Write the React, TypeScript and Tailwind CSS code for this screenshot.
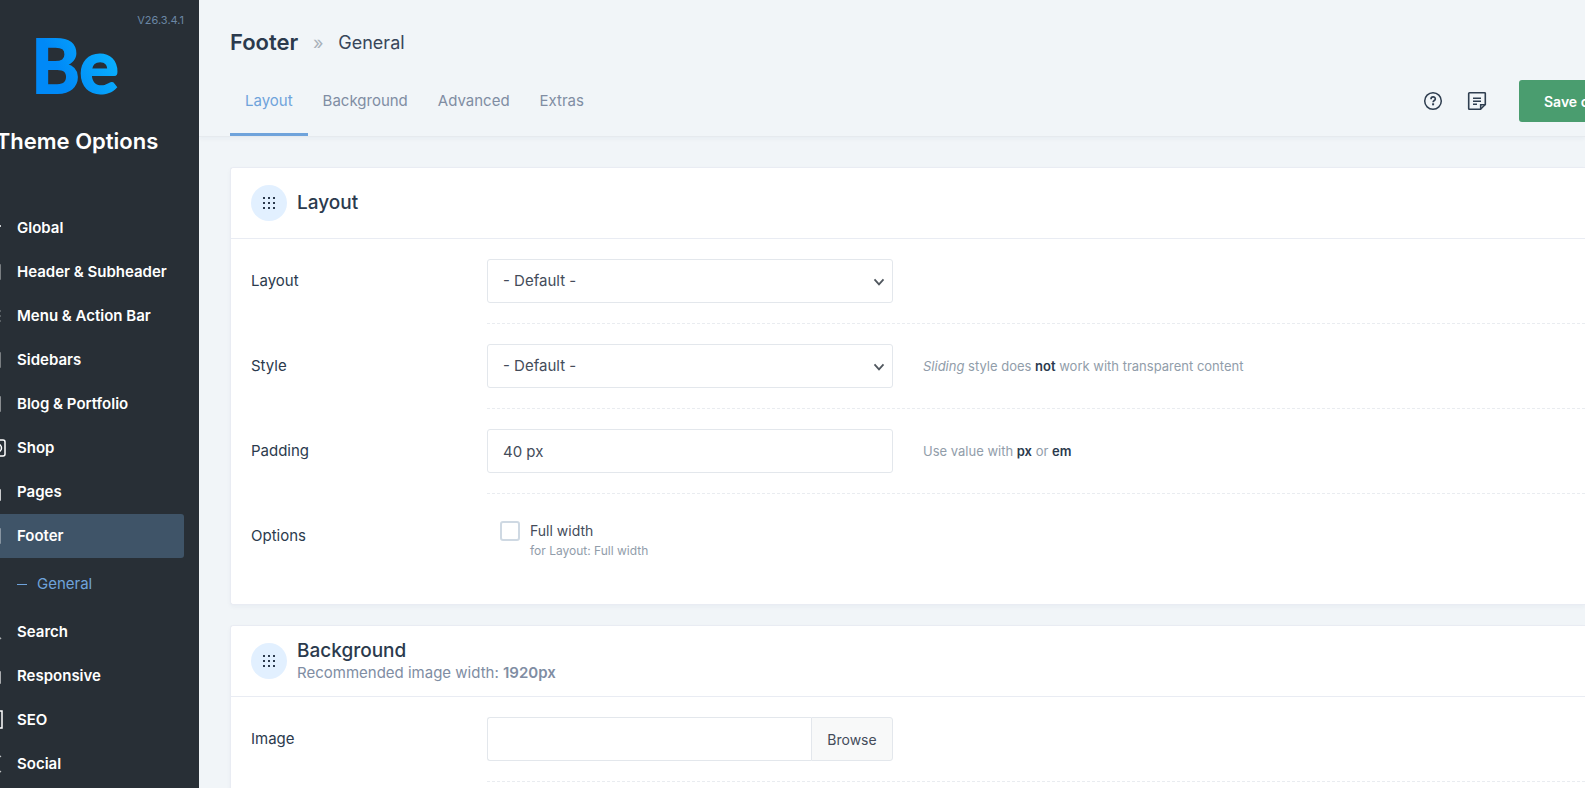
import { useState, type ReactNode } from "react";

const menu: { name: string; icon: ReactNode }[] = [
  { name: "Global", icon: <path d="M2 10h16M10 4v14" /> },
  { name: "Header & Subheader", icon: <path d="M3 5h14v14H3zM3 9h14" opacity=".5" /> },
  { name: "Menu & Action Bar", icon: <path d="M3 7h15M3 12h15M3 17h15" opacity=".3" /> },
  { name: "Sidebars", icon: <path d="M3 5h14v14H3zM9 5v14" opacity=".5" /> },
  { name: "Blog & Portfolio", icon: <path d="M3 5h14v14H3zM3 12h14M10 5v14" opacity=".6" /> },
  {
    name: "Shop",
    icon: (
      <>
        <rect x="6" y="4" width="16" height="16" rx="2" />
        <circle cx="14.500" cy="12" r="4" />
      </>
    ),
  },
  { name: "Pages", icon: <path d="M3 3h9l5 7v10H3z" /> },
  { name: "Footer", icon: <path d="M3 5h14v14H3zM3 15h14" opacity=".5" /> },
  { name: "Search", icon: <path d="M13 14l5 5M14 9a5 5 0 1 1-10 0 5 5 0 0 1 10 0" opacity=".6" /> },
  { name: "Responsive", icon: <path d="M3 5h10v14H3zM13 8h4v11h-4" opacity=".8" /> },
  { name: "SEO", icon: <path d="M3 3h16v17H3z" /> },
  { name: "Social", icon: <path d="M6 12l12-8M6 12l12 8" opacity=".7" /> },
];

const tabs = ["Layout", "Background", "Advanced", "Extras"];

const fieldClass =
  "h-11 w-full rounded-[3px] border border-[#e3e7ec] bg-white px-[15px] text-[15px] text-[#444c5a] outline-none";

function Sidebar() {
  return (
    <aside className="flex w-[199px] shrink-0 justify-end overflow-hidden bg-[#282f36]">
      <div className="w-[244px] shrink-0">
        <p className="h-9 pt-3 pr-[15px] text-right text-[11px] leading-4 text-[#6b87a5]">V26.3.4.1</p>
        <svg viewBox="0 0 92 62" className="mx-auto h-[62px] w-[92px] overflow-visible" role="img" aria-label="Be">
          <defs>
            <linearGradient id="be" x1="0" y1="0.7" x2="1" y2="0.2">
              <stop offset="0.3" stopColor="#0089f7" />
              <stop offset="1" stopColor="#0bb8ff" />
            </linearGradient>
          </defs>
          <text
            x="44"
            y="57"
            textAnchor="middle"
            fill="url(#be)"
            stroke="url(#be)"
            strokeWidth="2"
            className="font-['Lato',sans-serif] text-[74px] font-bold"
          >
            Be
          </text>
        </svg>
        <h2 className="mt-7 text-center text-[22px] leading-[30px] font-semibold text-white">Theme Options</h2>

        <nav className="mt-[50px] px-[15px]">
          {menu.map((item) => (
            <div key={item.name}>
              <a
                href="#"
                className={`flex h-11 items-center gap-[10px] rounded-[3px] pl-[13px] text-[15px] leading-5 font-semibold text-white ${
                  item.name === "Footer" ? "bg-[#3f5468]" : ""
                }`}
              >
                <svg viewBox="0 0 24 24" className="size-6 shrink-0" fill="none" stroke="currentColor" strokeWidth="1.5">
                  {item.icon}
                </svg>
                {item.name}
              </a>
              {item.name === "Footer" && (
                <a href="#" className="flex h-[52px] items-center gap-[10px] pl-[47px] text-[15px] text-[#6fa3db]">
                  <span className="h-px w-[10px] bg-[#6fa3db]" />
                  General
                </a>
              )}
            </div>
          ))}
        </nav>
      </div>
    </aside>
  );
}

type RowProps = { label: string; id: string; desc?: ReactNode; last?: boolean; children: ReactNode };

function Row({ label, id, desc, last, children }: RowProps) {
  return (
    <div className="flex pl-5">
      <label htmlFor={id} className="w-[236px] shrink-0 pt-5 text-[15px] leading-[44px] text-[#2b3a4d]">
        {label}
      </label>
      <div className={`flex grow gap-[30px] py-5 ${last ? "" : "border-b border-dashed border-[#e9ecf0]"}`}>
        <div className="w-[406px] shrink-0">{children}</div>
        {desc && <p className="text-[13px] leading-[44px] text-[#919daa]">{desc}</p>}
      </div>
    </div>
  );
}

function Select({ id }: { id: string }) {
  return (
    <div className="relative">
      <select id={id} className={`${fieldClass} appearance-none`}>
        <option>- Default -</option>
      </select>
      <svg
        viewBox="0 0 12 8"
        className="pointer-events-none absolute top-[19px] right-2 h-2 w-3"
        fill="none"
        stroke="#50575e"
        strokeWidth="1.800"
      >
        <path d="M1.500 1.300 6 6.300l4.500-5" />
      </svg>
    </div>
  );
}

function Card({ title, subtitle, children }: { title: string; subtitle?: ReactNode; children: ReactNode }) {
  return (
    <section className="rounded-l-[3px] border border-r-0 border-[#e9ecf3] bg-white shadow-[0_2px_4px_rgba(30,60,90,0.04)]">
      <header className="flex h-[71px] items-center gap-[10px] border-b border-[#e9ecf3] px-5">
        <span className="flex size-9 items-center justify-center rounded-full bg-[#e2f0ff]">
          <svg viewBox="0 0 12 12" className="size-3" fill="#2b3a4d" shapeRendering="crispEdges">
            {[0, 5, 10].map((y) => [0, 5, 10].map((x) => <rect key={`${x}-${y}`} x={x} y={y} width="2" height="2" />))}
          </svg>
        </span>
        <div>
          <h3 className="text-[19px] leading-6 font-medium text-[#2b3a4d]">{title}</h3>
          {subtitle && <p className="text-[15px] leading-5 text-[#808da3]">{subtitle}</p>}
        </div>
      </header>
      <div className="pb-5">{children}</div>
    </section>
  );
}

export default function App() {
  const [tab, setTab] = useState("Layout");

  return (
    <div className="flex h-screen overflow-hidden bg-[#f1f5f8] font-['Inter',sans-serif]">
      <Sidebar />

      <main className="min-w-0 grow overflow-hidden">
        <header className="border-b border-[#e6eaee] pl-[31px] shadow-[0_2px_4px_rgba(30,60,90,0.04)]">
          <div className="flex h-[66px] items-center pt-[18px]">
            <h1 className="text-[22px] leading-[30px] font-semibold text-[#2b3a4d]">Footer</h1>
            <span className="w-10 text-center text-[18px] text-[#a9b1ba]">»</span>
            <span className="text-[18px] text-[#38465a]">General</span>
          </div>
          <div className="flex h-[70px]">
            {tabs.map((t) => (
              <button
                key={t}
                onClick={() => setTab(t)}
                className={`border-b-3 px-[15px] pt-1 text-[15px] ${
                  t === tab ? "border-[#6fa3db] text-[#6fa3db]" : "border-transparent text-[#808da3]"
                }`}
              >
                {t}
              </button>
            ))}
            <div className="-mr-[92px] ml-auto flex shrink-0 items-center">
              <button aria-label="Help" className="mr-5 text-[#2f3e50]">
                <svg viewBox="0 0 24 24" className="size-6" fill="none" stroke="currentColor" strokeWidth="1.500">
                  <circle cx="12" cy="12" r="8.300" />
                  <path d="M10 10.200c0-3 4.300-2.900 4.300-.3 0 1.600-2.200 1.500-2.200 3.300" strokeWidth="1.700" />
                  <path d="M11.100 14.300h2v2h-2z" fill="currentColor" stroke="none" />
                </svg>
              </button>
              <button aria-label="Changelog" className="mr-[30px] text-[#2f3e50]">
                <svg viewBox="0 0 24 24" className="size-6" fill="none" stroke="currentColor" strokeWidth="1.600">
                  <path d="M4.500 3.700h15a.8.8 0 0 1 .8.8V15.500l-4.800 4.800H4.500a.8.8 0 0 1-.8-.8v-15a.8.8 0 0 1 .8-.8z" />
                  <path d="M20.300 15.700h-4.600v4.600" />
                  <path d="M8 9.200h8M8 12.200h8M8 15.200h4" />
                </svg>
              </button>
              <button className="h-[42px] w-[158px] rounded-[3px] bg-[#4a9d6f] px-[25px] text-left text-[14px] font-semibold whitespace-nowrap text-white">
                Save changes
              </button>
            </div>
          </div>
        </header>

        <div className="space-y-5 pt-[30px] pl-[31px]">
          <Card title="Layout">
            <Row label="Layout" id="layout">
              <Select id="layout" />
            </Row>
            <Row
              label="Style"
              id="style"
              desc={
                <>
                  <i>Sliding</i> style does <b className="font-semibold text-[#2b3a4d]">not</b> work with transparent content
                </>
              }
            >
              <Select id="style" />
            </Row>
            <Row
              label="Padding"
              id="padding"
              desc={
                <>
                  Use value with <b className="font-semibold text-[#2b3a4d]">px</b> or{" "}
                  <b className="font-semibold text-[#2b3a4d]">em</b>
                </>
              }
            >
              <input id="padding" type="text" defaultValue="40 px" className={fieldClass} />
            </Row>
            <Row label="Options" id="full-width" last>
              <div className="flex h-[50px] gap-[10px] pt-[7px] pl-[13px]">
                <input
                  id="full-width"
                  type="checkbox"
                  className="size-5 shrink-0 appearance-none rounded-[3px] border-2 border-[#cfd9e3] bg-white checked:bg-[#6fa3db]"
                />
                <label htmlFor="full-width" className="text-[14px] leading-5 text-[#444c5a]">
                  Full width
                  <span className="block text-[12px] text-[#919daa]">for Layout: Full width</span>
                </label>
              </div>
            </Row>
          </Card>

          <Card
            title="Background"
            subtitle={
              <>
                Recommended image width: <b className="font-semibold">1920px</b>
              </>
            }
          >
            <Row label="Image" id="image">
              <div className="flex h-11">
                <input
                  id="image"
                  type="text"
                  className="min-w-0 grow rounded-l-[3px] border border-r-0 border-[#e3e7ec] px-[15px] text-[15px] text-[#444c5a] outline-none"
                />
                <button className="w-[82px] rounded-r-[3px] border border-[#e3e7ec] bg-[#f8f9f9] text-[14px] text-[#444c5a]">
                  Browse
                </button>
              </div>
            </Row>
          </Card>
        </div>
      </main>
    </div>
  );
}
